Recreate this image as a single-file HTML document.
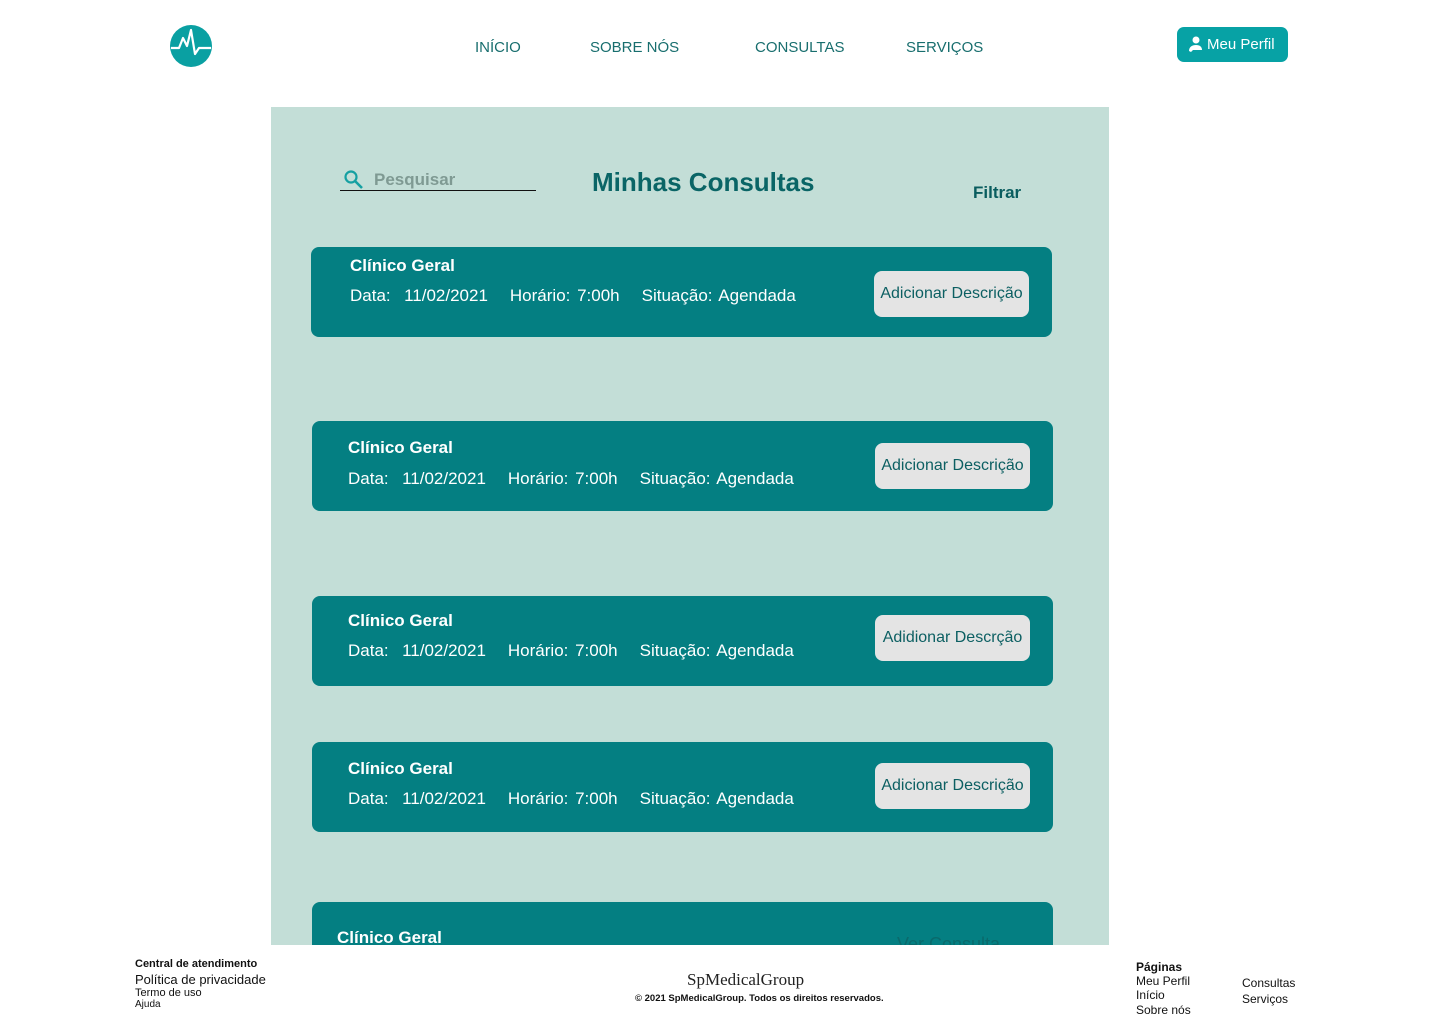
<!DOCTYPE html>
<html><head><meta charset="utf-8"><style>
*{margin:0;padding:0;box-sizing:border-box}
body{width:1440px;height:1024px;background:#fff;font-family:"Liberation Sans",sans-serif;position:relative;overflow:hidden}
.a{position:absolute;white-space:nowrap}
.nav{font-size:15px;color:#186e6e;top:39px;letter-spacing:0}
.panel{position:absolute;left:271px;top:107px;width:838px;height:838px;background:#c3ded7;overflow:hidden}
.card{position:absolute;width:741px;height:90px;background:#047f82;border-radius:8px}
.card .t{position:absolute;left:36px;top:17px;color:#fff;font-weight:bold;font-size:17px}
.card .d{position:absolute;left:36px;top:48px;color:#fff;font-size:17px;word-spacing:2px}
.card .d span{margin-right:22px}
.btn{position:absolute;left:563px;width:155px;height:46px;background:#e4e4e4;border-radius:8px;color:#0c5f62;font-size:16px;text-align:center;line-height:46px}
.f{font-size:12px;color:#111}
</style></head><body>
<svg class="a" style="left:170px;top:25px" width="42" height="42" viewBox="0 0 42 42"><circle cx="21" cy="21" r="21" fill="#0aa0a2"/><path d="M1 23h8l4-10 4 8 4-16 4 24 4-6h12" fill="none" stroke="#fff" stroke-width="2.2" stroke-linejoin="round"/></svg>
<div class="a nav" style="left:475px">INÍCIO</div>
<div class="a nav" style="left:590px">SOBRE NÓS</div>
<div class="a nav" style="left:755px">CONSULTAS</div>
<div class="a nav" style="left:906px">SERVIÇOS</div>
<div class="a" style="left:1177px;top:27px;width:111px;height:35px;background:#07a2a5;border-radius:7px;color:#fff;font-size:15px;line-height:35px;padding-left:30px">Meu Perfil</div>
<svg class="a" style="left:1186px;top:35px" width="18" height="18" viewBox="0 0 18 18"><circle cx="10" cy="5" r="3.5" fill="#fff"/><path d="M3 16c0-4 3-6 7-6s6 2 6 5H7l-2 2z" fill="#fff"/></svg>
<div class="panel">
<svg class="a" style="left:72px;top:62px" width="22" height="22" viewBox="0 0 22 22"><circle cx="8" cy="8" r="5.5" fill="none" stroke="#15a0a2" stroke-width="2.2"/><path d="M12 12l7 7" stroke="#15a0a2" stroke-width="2.6"/></svg>
<div class="a" style="left:103px;top:63px;font-size:17px;font-weight:bold;color:#7f9a93">Pesquisar</div>
<div class="a" style="left:69px;top:83px;width:196px;height:1px;background:#111"></div>
<div class="a" style="left:321px;top:60px;font-size:26px;font-weight:bold;color:#0a6566">Minhas Consultas</div>
<div class="a" style="left:702px;top:76px;font-size:17px;font-weight:bold;color:#0a5d5f">Filtrar</div>
<div class="card" style="left:40px;top:140px"><div class="t" style="left:39px;top:9px">Clínico Geral</div><div class="d" style="left:39px;top:39px"><span>Data:&nbsp; 11/02/2021</span><span>Horário: 7:00h</span><span>Situação: Agendada</span></div><div class="btn" style="top:24px">Adicionar Descrição</div></div>
<div class="card" style="left:41px;top:314px"><div class="t" style="top:17px">Clínico Geral</div><div class="d"><span>Data:&nbsp; 11/02/2021</span><span>Horário: 7:00h</span><span>Situação: Agendada</span></div><div class="btn" style="top:22px">Adicionar Descrição</div></div>
<div class="card" style="left:41px;top:489px"><div class="t" style="top:15px">Clínico Geral</div><div class="d" style="top:45px"><span>Data:&nbsp; 11/02/2021</span><span>Horário: 7:00h</span><span>Situação: Agendada</span></div><div class="btn" style="top:19px">Adidionar Descrção</div></div>
<div class="card" style="left:41px;top:635px"><div class="t" style="top:17px">Clínico Geral</div><div class="d" style="top:47px"><span>Data:&nbsp; 11/02/2021</span><span>Horário: 7:00h</span><span>Situação: Agendada</span></div><div class="btn" style="top:21px">Adicionar Descrição</div></div>
<div class="card" style="left:41px;top:795px"><div class="t" style="left:25px;top:26px">Clínico Geral</div><div class="a" style="left:585px;top:32px;color:#0a6a6c;font-size:18px">Ver Consulta</div></div>
</div>
<div class="a f" style="left:135px;top:958px;font-weight:bold;font-size:11px">Central de atendimento</div>
<div class="a f" style="left:135px;top:972px;font-size:13px">Política de privacidade</div>
<div class="a f" style="left:135px;top:987px;font-size:11px">Termo de uso</div>
<div class="a f" style="left:135px;top:999px;font-size:10px">Ajuda</div>
<div class="a" style="left:687px;top:970px;font-family:'Liberation Serif',serif;font-size:17px;color:#222">SpMedicalGroup</div>
<div class="a" style="left:635px;top:993px;font-size:9.5px;font-weight:bold;color:#111">© 2021 SpMedicalGroup. Todos os direitos reservados.</div>
<div class="a f" style="left:1136px;top:960px;font-weight:bold">Páginas</div>
<div class="a f" style="left:1136px;top:974px">Meu Perfil</div>
<div class="a f" style="left:1136px;top:988px">Início</div>
<div class="a f" style="left:1136px;top:1003px">Sobre nós</div>
<div class="a f" style="left:1242px;top:976px">Consultas</div>
<div class="a f" style="left:1242px;top:992px">Serviços</div>
</body></html>
